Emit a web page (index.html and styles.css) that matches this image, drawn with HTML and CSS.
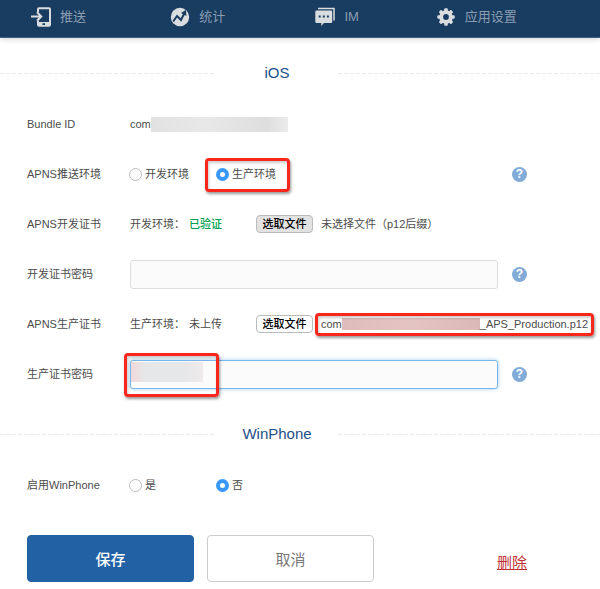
FILE: index.html
```
<!DOCTYPE html>
<html lang="zh-CN">
<head>
    <meta charset="UTF-8">
    <meta name="viewport" content="width=device-width, initial-scale=1.0">
    <title>应用设置</title>
    <link rel="stylesheet" href="styles.css">
</head>
<body>
    <header class="topbar">
        <nav class="nav">
            <a href="#push">
                <svg width="20" height="20" viewBox="0 0 20 20">
                    <path d="M7 5V2.2Q7 1.2 8 1.2H18Q19 1.2 19 2.2V17.8Q19 18.8 18 18.8H8Q7 18.8 7 17.8V14" fill="none" stroke="#dadddf" stroke-width="2"/>
                    <path d="M7 15H19V19H7Z" fill="#dadddf"/>
                    <path d="M11.5 16.2H14V18H11.5Z" fill="#193c61"/>
                    <path d="M0 9.5H10M6 5.2L10.3 9.5L6 13.8" fill="none" stroke="#dadddf" stroke-width="2"/>
                </svg>
                推送
            </a>
            <a href="#stats">
                <svg width="20" height="20" viewBox="0 0 20 20">
                    <circle cx="10" cy="10" r="9.2" fill="#dadddf"/>
                    <path d="M3.2 14.5L7 9L11 13L14.2 6.5" fill="none" stroke="#193c61" stroke-width="2"/>
                    <path d="M11 6L16 2.8L16.4 9Z" fill="#193c61"/>
                </svg>
                统计
            </a>
            <a href="#im">
                <svg width="20" height="20" viewBox="0 0 20 20">
                    <path d="M3 1.6H19V13.5" fill="none" stroke="#dadddf" stroke-width="1.5"/>
                    <path d="M1.5 3.5H16Q17.2 3.5 17.2 4.7V14.8Q17.2 16 16 16H9L6.3 19V16H1.5Q.3 16 .3 14.8V4.7Q.3 3.5 1.5 3.5Z" fill="#dadddf"/>
                    <path d="M3.7 8.6H5.7V10.6H3.7ZM7.8 8.6H9.8V10.6H7.8ZM11.9 8.6H13.9V10.6H11.9Z" fill="#193c61"/>
                </svg>
                IM
            </a>
            <a href="#settings">
                <svg width="20" height="20" viewBox="0 0 20 20">
                    <g fill="#dadddf">
                        <circle cx="10" cy="10" r="6.8"/>
                        <rect id="tooth" x="8.2" y="1.3" width="3.6" height="17.4" rx="1"/>
                        <use href="#tooth" transform="rotate(45 10 10)"/>
                        <use href="#tooth" transform="rotate(90 10 10)"/>
                        <use href="#tooth" transform="rotate(135 10 10)"/>
                    </g>
                    <circle cx="10" cy="10" r="2.9" fill="#193c61"/>
                </svg>
                应用设置
            </a>
        </nav>
    </header>

    <form class="settings">
        <h2 class="section-title"><span>iOS</span></h2>

        <div class="row">
            <span class="label">Bundle ID</span>
            <span>com</span><span class="mask mask-id"></span>
        </div>

        <div class="row" role="radiogroup" aria-label="APNS推送环境">
            <span class="label">APNS推送环境</span>
            <div class="field">
                <label class="option"><input type="radio" name="env">开发环境</label>
                <label class="option marked mark-env"><input type="radio" name="env" checked>生产环境</label>
            </div>
            <button type="button" class="help" aria-label="帮助">?</button>
        </div>

        <div class="row">
            <span class="label">APNS开发证书</span>
            <div class="status">开发环境：<span class="verified">已验证</span></div>
            <button type="button" class="file-btn file-btn-pressed">选取文件</button>
            <span>未选择文件（p12后缀）</span>
        </div>

        <div class="row">
            <label class="label" for="devPassword">开发证书密码</label>
            <div class="field"><input type="text" class="text-input" id="devPassword"></div>
            <button type="button" class="help" aria-label="帮助">?</button>
        </div>

        <div class="row">
            <span class="label">APNS生产证书</span>
            <div class="status">生产环境：<span>未上传</span></div>
            <button type="button" class="file-btn">选取文件</button>
            <div class="filename marked mark-file">com<span class="mask mask-file"></span>_APS_Production.p12</div>
        </div>

        <div class="row">
            <label class="label" for="prodPassword">生产证书密码</label>
            <div class="field marked mark-password">
                <input type="text" class="text-input text-input-active" id="prodPassword">
                <span class="mask mask-password-text"></span>
            </div>
            <button type="button" class="help" aria-label="帮助">?</button>
        </div>

        <h2 class="section-title"><span>WinPhone</span></h2>

        <div class="row" role="radiogroup" aria-label="启用WinPhone">
            <span class="label">启用WinPhone</span>
            <div class="field">
                <label class="option"><input type="radio" name="winphone">是</label>
                <label class="option"><input type="radio" name="winphone" checked>否</label>
            </div>
        </div>

        <div class="actions">
            <button type="submit" class="btn btn-save">保存</button>
            <button type="reset" class="btn btn-cancel">取消</button>
            <a href="#delete" class="delete">删除</a>
        </div>
    </form>
</body>
</html>
```

FILE: styles.css
```
*, *::before, *::after { box-sizing: border-box; }
body { margin: 0; background: #fff; color: #4c4c4c; font: 11px/20px "Liberation Sans", "Noto Sans CJK SC", sans-serif; overflow-x: hidden; }
button, input { font-family: inherit; }

.topbar { background: #193c61; border-bottom: 1px solid #40607f; padding-bottom: 4px; box-shadow: 0 1px 6px rgba(0, 0, 0, 0.18); }
.nav { display: grid; grid-template-columns: repeat(4, 1fr); margin: 0 54px 0 -11px; }
.nav a { display: flex; align-items: center; justify-content: center; gap: 9px; height: 33px; color: #8b9eb1; font-size: 13px; text-decoration: none; }

.section-title { display: flex; align-items: center; margin: 25px 0 16px; color: #1d5088; font-size: 15px; font-weight: normal; line-height: 20px; }
.section-title span { width: 122px; text-align: center; }
.section-title::before, .section-title::after { content: ""; height: 1px; background: repeating-linear-gradient(90deg, #e9e9e9 0 4px, #fff 4px 6px); }
.section-title::before { width: 36%; }
.section-title::after { flex: 1; }

.row { display: flex; align-items: center; height: 50px; padding-left: 27px; white-space: nowrap; }
.label { flex: 0 0 103px; }
.field { display: flex; flex: 0 1 368px; }
.status { display: flex; width: 126px; }
.status span { margin-left: 4px; }
.verified { color: #00a155; font-weight: 500; }

.option { display: flex; align-items: center; gap: 3px; width: 87px; }
.option input { appearance: none; width: 13px; height: 13px; margin: 0 0 0 -1px; border: 1px solid #bbb; border-radius: 50%; background: #fff; }
.option input:checked { border: 4px solid #3898fc; }

.text-input { width: 100%; height: 29px; padding: 0 8px; border: 1px solid #ddd; border-radius: 3px; background: #fbfbfb; font-size: 11px; outline: none; }
.text-input-active { border-color: #79b7ea; box-shadow: 0 0 4px rgba(102, 175, 233, 0.6); }

.help { flex: none; width: 15px; height: 15px; margin-left: 14px; padding: 0; border: 0; border-radius: 50%; background: #83abd8; color: #fff; font-size: 12px; font-weight: bold; line-height: 15px; }
.file-btn { width: 57px; height: 18px; margin-right: 8px; padding: 0; border: 1px solid #bbb; border-radius: 4px; background: #fff; color: #000; font-size: 11px; font-weight: 500; line-height: 16px; }
.file-btn-pressed { background: #e2e2e2; }

/* blurred-out values */
.mask { background: #e6e6e6; }
.mask-id { width: 137px; height: 15px; background: linear-gradient(90deg, #e2e2e2, #e8e8e8 40%, #dedede 85%, #ececec); }
.mask-file { width: 138px; height: 12px; background: linear-gradient(90deg, #dfbcbc, #e4c4c3 50%, #dbb8b8); }
.mask-password-text { position: absolute; top: 2px; left: 1px; width: 72px; height: 20px; background: linear-gradient(90deg, #efd9da, #e6e7e9 20%, #e6e7e9 75%, #eeeaeb); }
.filename { display: flex; align-items: center; }

/* red callout frames */
.marked { position: relative; }
.marked::after { content: ""; position: absolute; border: 3px solid #f8261b; border-radius: 4px; box-shadow: 1px 2px 3px rgba(0, 0, 0, 0.4), inset 1px 2px 3px rgba(0, 0, 0, 0.2); pointer-events: none; }
.mark-env::after { inset: -6px 14px -8px -12px; }
.mark-file::after { inset: -1px -6px -2px -6px; }
.mark-password::after { top: -7px; left: -6px; width: 95px; height: 44px; }

.actions { display: flex; align-items: center; margin-top: 25px; padding: 0 27px 7px; }
.btn { flex: 0 1 167px; height: 47px; margin-right: 13px; border-radius: 4px; font-size: 15px; }
.btn-save { border: 1px solid #2262a4; background: #2262a4; color: #fff; font-weight: 500; }
.btn-cancel { border: 1px solid #ccc; background: #fff; color: #777; }
.delete { margin: 8px 0 0 110px; color: #bf3034; font-size: 15px; }
```
